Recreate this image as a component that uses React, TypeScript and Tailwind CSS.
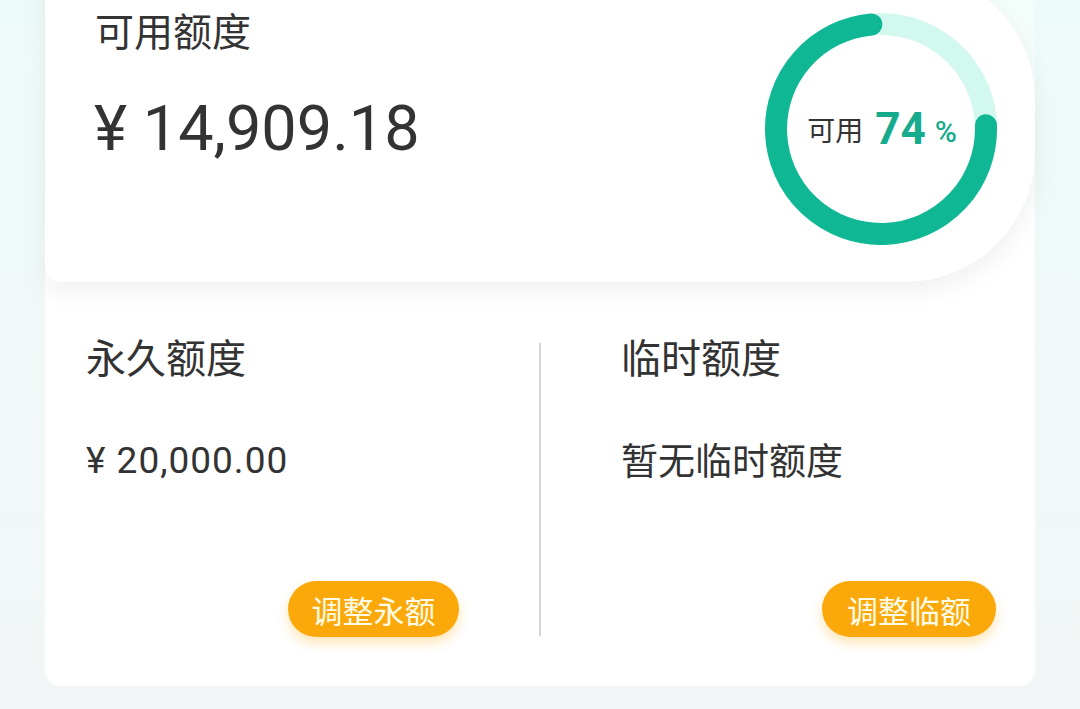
import React from 'react';

const cjk = "font-['Noto_Sans_CJK_SC',sans-serif]";
const num = "font-['Roboto','Noto_Sans_CJK_SC',sans-serif]";

function UsageRing({ percent }: { percent: number }) {
  const r = 105;
  const c = 2 * Math.PI * r;
  const used = (percent / 100) * c;

  return (
    <div className="relative h-[232px] w-[232px]">
      <svg width="232" height="232" viewBox="0 0 232 232">
        {/* 轨道 */}
        <circle cx="116" cy="116" r={r} fill="none" stroke="#d3f8ef" strokeWidth="22" />
        {/* 进度：从3点钟方向顺时针到12点钟 */}
        <circle
          cx="116"
          cy="116"
          r={r}
          fill="none"
          stroke="#10b794"
          strokeWidth="22"
          strokeLinecap="round"
          strokeDasharray={`${used} ${c}`}
          transform="rotate(-2 116 116)"
        />
      </svg>
      <div className="absolute inset-0 flex items-center justify-center pl-[2px]">
        <span className={`${cjk} text-[28px] leading-none text-[#333333]`}>可用</span>
        <span className={`${num} ml-[12px] text-[44px] font-bold leading-none text-[#16ab8c]`}>
          {percent}
        </span>
        <span className={`${num} ml-[9px] mt-[5px] text-[30px] font-medium leading-none text-[#16ab8c]`}>
          %
        </span>
      </div>
    </div>
  );
}

export default function App() {
  return (
    <div className="h-[709px] w-full overflow-hidden bg-[linear-gradient(180deg,#edfbf8_0%,#f1f8f7_60%,#f2f6f6_100%)]">
      <div className="mx-[45px] rounded-b-[16px] bg-[linear-gradient(180deg,#f1fcf9_0px,#f8fefc_160px,#ffffff_260px)]">
        {/* 可用额度卡片 */}
        <div className="relative z-10 -mt-[30px] flex h-[312px] justify-between rounded-bl-[16px] rounded-r-[130px] bg-white shadow-[0_10px_24px_rgba(0,0,0,0.06)]">
          <div className="pl-[49px] pt-[40px]">
            <div className={`${cjk} pl-[1px] text-[39px] leading-none text-[#333333]`}>可用额度</div>
            <div className={`${num} mt-[48px] text-[63px] leading-none text-[#333333]`}>¥ 14,909.18</div>
          </div>
          <div className="pr-[38px] pt-[43px]">
            <UsageRing percent={74} />
          </div>
        </div>

        {/* 永久 / 临时额度 */}
        <div className="flex pb-[49px] pt-[54px]">
          <div className="flex w-[494px] flex-col pl-[41px] pr-[80px]">
            <div className={`${cjk} text-[40px] leading-none text-[#333333]`}>永久额度</div>
            <div className={`${num} mt-[66px] text-[37px] leading-none tracking-[1px] text-[#333333]`}>¥ 20,000.00</div>
            <button
              type="button"
              className={`${cjk} ml-auto mt-[102px] flex h-[56px] w-[171px] items-center justify-center rounded-full bg-[#fba90a] text-[31px] leading-none text-[#fffbe6] shadow-[0_6px_12px_rgba(251,169,10,0.3)]`}
            >
              调整永额
            </button>
          </div>

          <div className="mb-[1px] mt-[7px] w-[2px] bg-[#d4d4d4]" />

          <div className="flex flex-1 flex-col pl-[80px] pr-[39px]">
            <div className={`${cjk} text-[40px] leading-none text-[#333333]`}>临时额度</div>
            <div className={`${cjk} mt-[65px] text-[37px] leading-none text-[#333333]`}>暂无临时额度</div>
            <button
              type="button"
              className={`${cjk} ml-auto mt-[103px] flex h-[56px] w-[174px] items-center justify-center rounded-full bg-[#fba90a] text-[31px] leading-none text-[#fffbe6] shadow-[0_6px_12px_rgba(251,169,10,0.3)]`}
            >
              调整临额
            </button>
          </div>
        </div>
      </div>
    </div>
  );
}
